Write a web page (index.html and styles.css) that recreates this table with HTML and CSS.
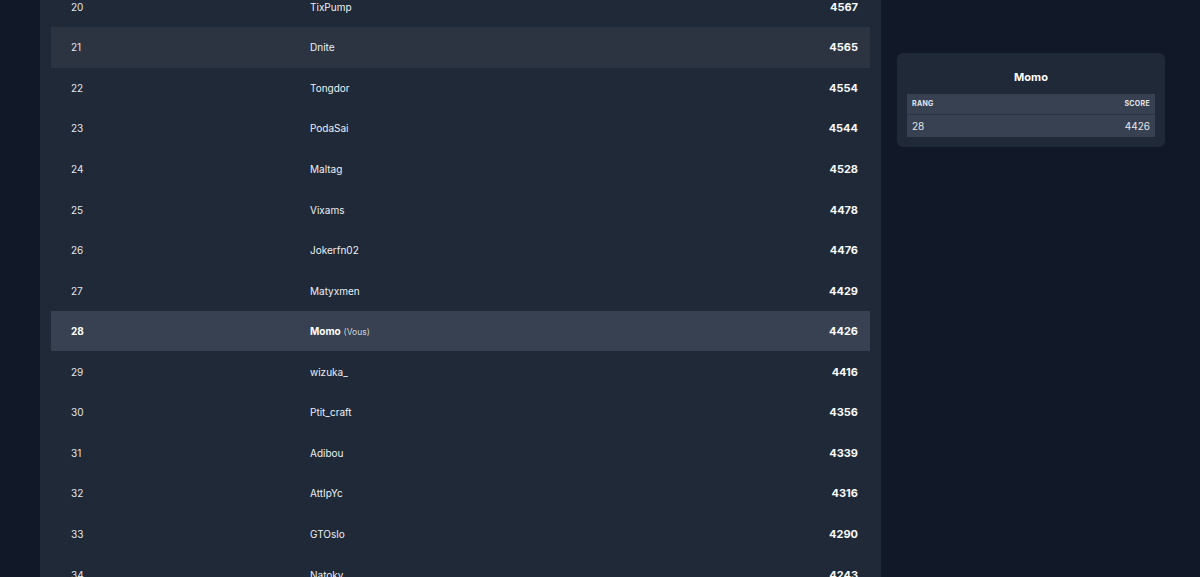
FILE: index.html
```html
<!DOCTYPE html>
<html lang="fr">
<head>
<meta charset="utf-8">
<title>Classement</title>
<link rel="stylesheet" href="styles.css">
</head>
<body>
<div class="page">
  <main class="board">
    <table class="ranking">
      <tbody>
        <tr><td class="rank">20</td><td class="name">TixPump</td><td class="score">4567</td></tr>
        <tr class="hover"><td class="rank">21</td><td class="name">Dnite</td><td class="score">4565</td></tr>
        <tr><td class="rank">22</td><td class="name">Tongdor</td><td class="score">4554</td></tr>
        <tr><td class="rank">23</td><td class="name">PodaSai</td><td class="score">4544</td></tr>
        <tr><td class="rank">24</td><td class="name">Maltag</td><td class="score">4528</td></tr>
        <tr><td class="rank">25</td><td class="name">Vixams</td><td class="score">4478</td></tr>
        <tr><td class="rank">26</td><td class="name">Jokerfn02</td><td class="score">4476</td></tr>
        <tr><td class="rank">27</td><td class="name">Matyxmen</td><td class="score">4429</td></tr>
        <tr class="me"><td class="rank">28</td><td class="name"><strong>Momo</strong> <span class="you">(Vous)</span></td><td class="score">4426</td></tr>
        <tr><td class="rank">29</td><td class="name">wizuka_</td><td class="score">4416</td></tr>
        <tr><td class="rank">30</td><td class="name">Ptit_craft</td><td class="score">4356</td></tr>
        <tr><td class="rank">31</td><td class="name">Adibou</td><td class="score">4339</td></tr>
        <tr><td class="rank">32</td><td class="name">AttIpYc</td><td class="score">4316</td></tr>
        <tr><td class="rank">33</td><td class="name">GTOslo</td><td class="score">4290</td></tr>
        <tr><td class="rank">34</td><td class="name">Natoky</td><td class="score">4243</td></tr>
      </tbody>
    </table>
  </main>
  <aside class="card">
    <h2 class="card-title">Momo</h2>
    <table class="mini">
      <thead>
        <tr><th class="left">Rang</th><th class="right">Score</th></tr>
      </thead>
      <tbody>
        <tr><td class="left">28</td><td class="right">4426</td></tr>
      </tbody>
    </table>
  </aside>
</div>
</body>
</html>
```

FILE: styles.css
```css
* { box-sizing: border-box; }
html, body {
  margin: 0;
  padding: 0;
  background: #111827;
  height: 577px;
  overflow: hidden;
}
body {
  font-family: Inter, "Liberation Sans", sans-serif;
  color: #e5e7eb;
}
.page {
  display: flex;
  align-items: flex-start;
  gap: 16px;
  padding-left: 40px;
}
.board {
  width: 841px;
  margin-top: -13.6px;
  background: #1f2937;
  padding: 0 11px 20px;
}
.ranking {
  width: 100%;
  border-collapse: collapse;
}
.ranking td {
  height: 40.57px;
  padding: 0;
  font-size: 10px;
  vertical-align: middle;
}
.ranking .rank {
  width: 259px;
  padding-left: 20px;
  color: #e5e7eb;
}
.ranking .name {
  color: #eef0f3;
}
.ranking .score {
  text-align: right;
  padding-right: 12px;
  font-weight: 700;
  font-size: 11px;
  color: #f9fafb;
}
.ranking tr.hover td { background: #2c3442; }
.ranking tr.me td { background: #374151; }
.ranking tr.me .rank { font-weight: 700; color: #fff; }
.ranking tr.me strong { font-weight: 700; color: #fff; }
.you { font-size: 8.5px; color: #d1d5db; }

.card {
  width: 268px;
  margin-top: 53px;
  background: #1f2937;
  border-radius: 6px;
  padding: 15px 10px 10px;
}
.card-title {
  margin: 0 0 8px;
  text-align: center;
  font-size: 11px;
  font-weight: 700;
  color: #fff;
  line-height: 18px;
}
.mini {
  width: 100%;
  border-collapse: collapse;
  background: #374151;
}
.mini th {
  height: 20px;
  font-size: 7px;
  font-weight: 700;
  text-transform: uppercase;
  letter-spacing: 0.3px;
  color: #e5e7eb;
  padding: 0 5px;
  border-bottom: 1px solid #2d3544;
}
.mini td {
  height: 23px;
  font-size: 10px;
  color: #e5e7eb;
  padding: 0 5px;
}
.mini .left { text-align: left; }
.mini .right { text-align: right; }
```
